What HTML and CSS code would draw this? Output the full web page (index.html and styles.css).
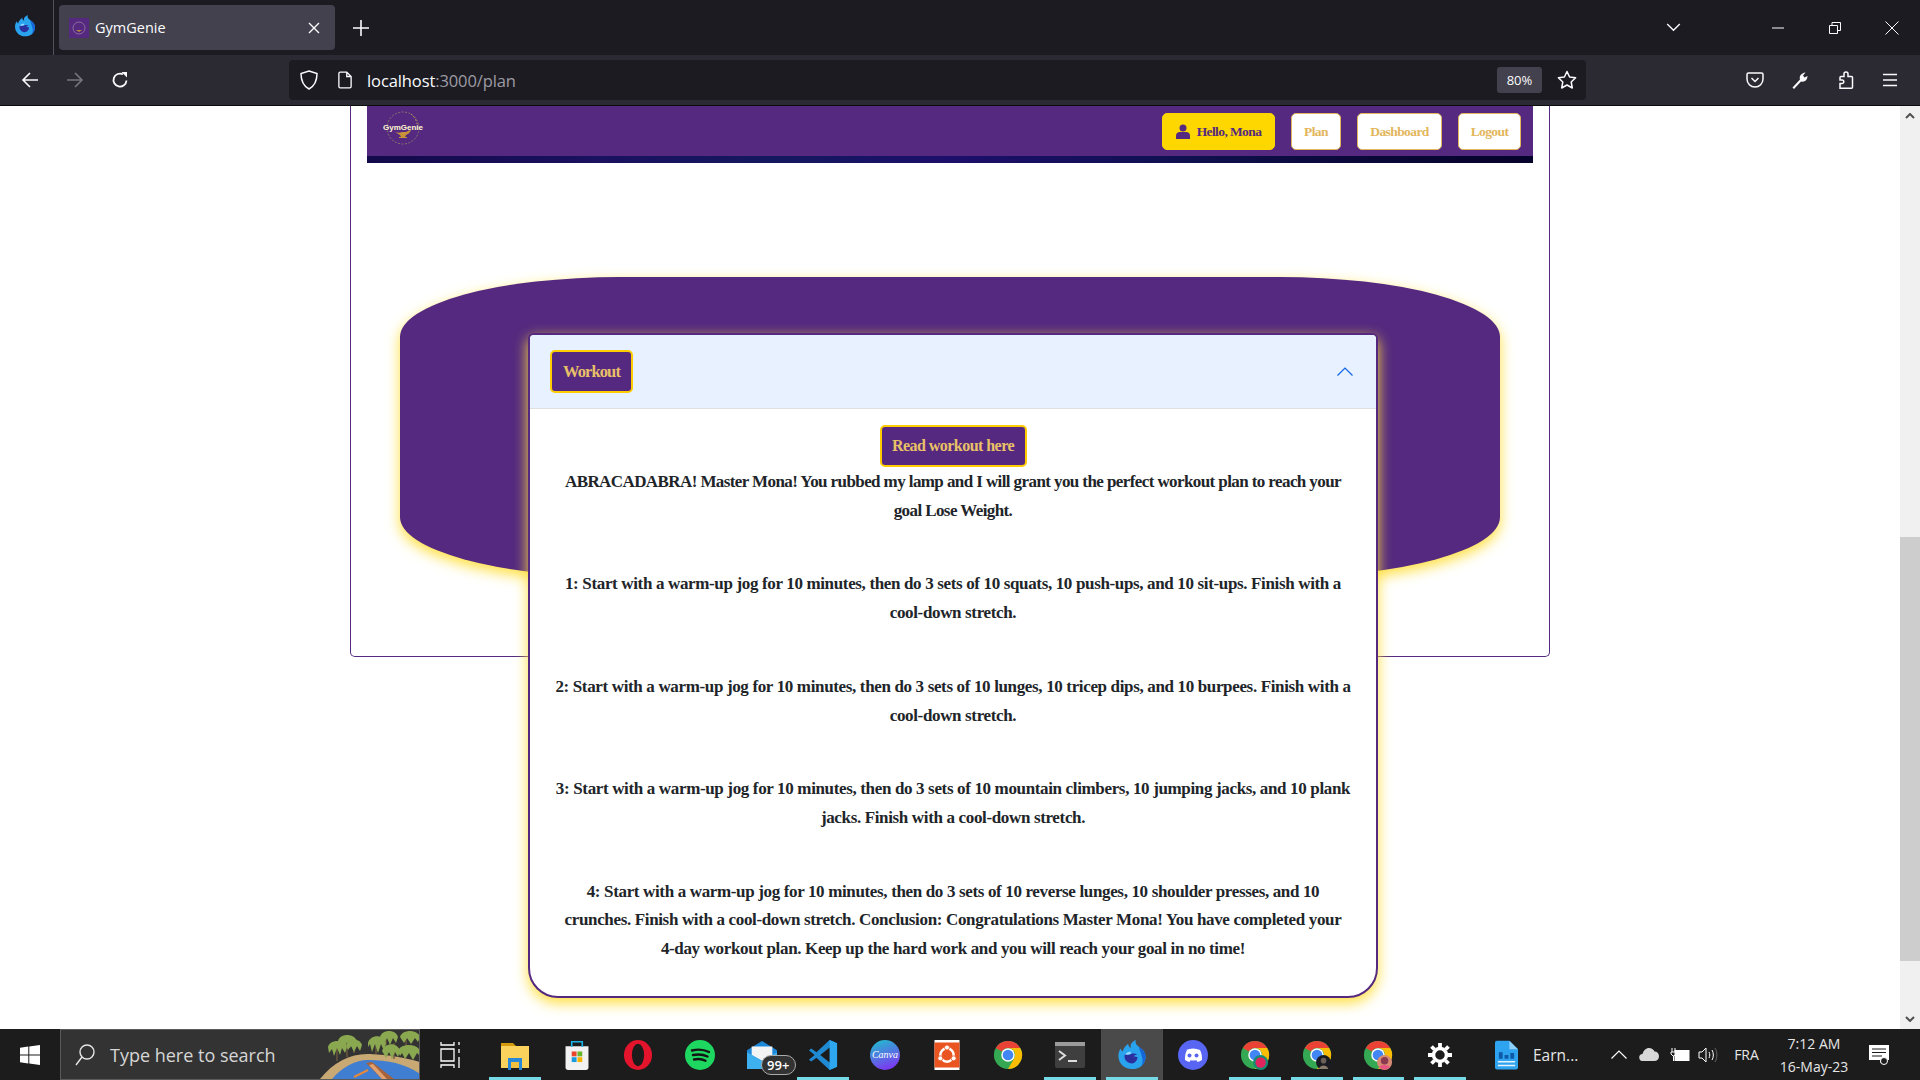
FILE: index.html
```html
<!DOCTYPE html>
<html lang="en">
<head>
<meta charset="utf-8">
<title>GymGenie</title>
<link rel="stylesheet" href="styles.css">
</head>
<body>
<svg class="defs" width="0" height="0">
  <symbol id="firefox" viewBox="0 0 32 32">
    <path d="M16 31C7.5 31 1.5 24.5 1.5 17c0-3 1-6 2.500-8 .3 1.500 1 2.500 2 3.200C7 8.500 10 5.500 12 4c-.2 2 1 3.500 3 4.500C13 4.500 17 1.500 20 0c-.8 3 .5 5 3 7 3.500 2.500 7.500 5.500 7.500 11C30.500 25.500 24.500 31 16 31z" fill="#2aa3ef"/>
    <path d="M23 7c3.500 2.500 7.500 5.500 7.500 11 0 4-2 7.500-5 10 2-3 2.500-7 1-10.500C25.500 14 24 10 23 7z" fill="#1565d8"/>
    <path d="M16 25c-4.500 0-8-3.300-8-7.300 0-1 .3-1.800.7-2.500 1.500 1 4 .8 6.300-.2 2.500-1 5-.5 6.500 1-1.500-.2-3 .2-3.800 1.200 2 .2 3.300 1 4.300 1-.5 4-3 6.800-6 6.800z" fill="#2b2f9e"/>
    <path d="M8.700 15.200c1.500-2 4-3 6.300-2.500-.5.700-.5 1.300 0 2-2.300 1-4.800 1.200-6.300.5z" fill="#8fd8ff"/>
  </symbol>
  <symbol id="chrome" viewBox="0 0 32 32">
    <circle cx="16" cy="16" r="15" fill="#34a853"/>
    <path d="M16 1a15 15 0 0 1 13 7.500H16a7.500 7.500 0 0 0-6.500 3.750L3 8.500A15 15 0 0 1 16 1z" fill="#ea4335"/>
    <path d="M29 8.500A15 15 0 0 1 16 31l6.500-11.250A7.500 7.500 0 0 0 22.500 12.250 7.500 7.500 0 0 0 16 8.500z" fill="#fbbc04"/>
    <circle cx="16" cy="16" r="7.200" fill="#fff"/>
    <circle cx="16" cy="16" r="5.700" fill="#4285f4"/>
  </symbol>
</svg>

<div class="screen">
  <header class="tabbar">
    <div class="ff-slot">
      <svg class="ff-logo" viewBox="0 0 32 32"><use href="#firefox"/></svg>
    </div>
    <div class="tab">
      <svg class="favicon" viewBox="0 0 20 20"><rect width="20" height="20" fill="#54297f"/><circle cx="10" cy="10" r="6" fill="none" stroke="#8d6d9a" stroke-width="1"/><path d="M7 12h6l-3 2z" fill="#b98a3c"/></svg>
      <span class="tab-title">GymGenie</span>
      <svg class="tab-close" viewBox="0 0 12 12"><path d="M1 1l10 10M11 1L1 11" stroke="#fbfbfe" stroke-width="1.400" fill="none"/></svg>
    </div>
    <svg class="new-tab" viewBox="0 0 16 16"><path d="M8 0v16M0 8h16" stroke="#fbfbfe" stroke-width="1.600" fill="none"/></svg>
    <svg class="tab-list" viewBox="0 0 16 10"><path d="M1 1l7 7 7-7" stroke="#fbfbfe" stroke-width="1.500" fill="none"/></svg>
    <svg class="win-btn win-min" viewBox="0 0 12 12"><path d="M0 6h12" stroke="#fbfbfe" stroke-width="1" fill="none"/></svg>
    <svg class="win-btn win-res" viewBox="0 0 12 12"><path d="M.5 3.500h8v8h-8zM3 3.500V.5h8.500v8H8.500" stroke="#fbfbfe" stroke-width="1" fill="none"/></svg>
    <svg class="win-btn win-cls" viewBox="0 0 14 14"><path d="M.5.5l13 13M13.500.5l-13 13" stroke="#fbfbfe" stroke-width="1" fill="none"/></svg>
  </header>

  <nav class="toolbar">
    <svg class="tool-icon tool-back" viewBox="0 0 18 18"><path d="M17 9H2M9 2 2 9l7 7" stroke="#fbfbfe" stroke-width="1.600" fill="none"/></svg>
    <svg class="tool-icon tool-fwd" viewBox="0 0 18 18"><path d="M1 9h15M9 2l7 7-7 7" stroke="#77767c" stroke-width="1.600" fill="none"/></svg>
    <svg class="tool-icon tool-reload" viewBox="0 0 18 18"><path d="M15.500 9.500A6.500 6.500 0 1 1 12 3.300" stroke="#fbfbfe" stroke-width="1.800" fill="none"/><path d="M10.500 1h5.500v5.500z" fill="#fbfbfe"/></svg>
    <div class="urlbar">
      <svg class="url-shield" viewBox="0 0 18 20"><path d="M9 1l8 2.500c0 7-1.500 12-8 15.500C2.500 15.500 1 10.500 1 3.500z" stroke="#fbfbfe" stroke-width="1.500" fill="none"/></svg>
      <svg class="url-page" viewBox="0 0 16 20"><path d="M2.500 1H10l5 5v11.500a1.500 1.500 0 0 1-1.500 1.500h-11A1.500 1.500 0 0 1 1 17.500v-15A1.500 1.500 0 0 1 2.500 1zM10 1v5h5" stroke="#fbfbfe" stroke-width="1.500" fill="none"/></svg>
      <span class="url-text">localhost<span class="url-dim">:3000/plan</span></span>
      <span class="zoom-badge">80%</span>
      <svg class="url-star" viewBox="0 0 20 20"><path d="M10 1.500l2.600 5.500 6 .8-4.400 4.200 1.100 6L10 15l-5.300 3 1.100-6L1.400 7.800l6-.8z" stroke="#fbfbfe" stroke-width="1.500" fill="none" stroke-linejoin="round"/></svg>
    </div>
    <svg class="tool-icon tool-pocket" viewBox="0 0 18 18"><path d="M2.500 2h13A1.500 1.500 0 0 1 17 3.500V8A8 8 0 0 1 1 8V3.500A1.500 1.500 0 0 1 2.500 2z" stroke="#fbfbfe" stroke-width="1.500" fill="none"/><path d="M5.500 7 9 10.500 12.500 7" stroke="#fbfbfe" stroke-width="1.500" fill="none"/></svg>
    <svg class="tool-icon tool-wrench" viewBox="0 0 18 18"><path d="M1.500 16.500 9 8.500c-1-3 1-6.500 5.500-7l-2.500 3 1.500 2 3-1.500c0 4-3 6.500-6.500 5.500l-7 7.500z" fill="#fbfbfe"/></svg>
    <svg class="tool-icon tool-puzzle" viewBox="0 0 18 18"><path d="M3 17.200h11.500a1 1 0 0 0 1-1V6.500a1 1 0 0 0-1-1H11V3a2 2 0 0 0-4 0v2.500H4a1 1 0 0 0-1 1V9h2a1.800 1.800 0 0 1 0 3.600H3z" stroke="#fbfbfe" stroke-width="1.500" fill="none"/></svg>
    <svg class="tool-icon tool-menu" viewBox="0 0 18 18"><path d="M2 3.500h14M2 9h14M2 14.500h14" stroke="#fbfbfe" stroke-width="1.600" fill="none"/></svg>
  </nav>

  <div class="viewport">
    <main class="page">
      <section class="frame">
        <div class="site-nav">
          <div class="site-nav-row">
            <svg class="site-logo" viewBox="0 0 44 40">
              <circle cx="22" cy="21" r="16" fill="none" stroke="#8a7570" stroke-width="1" stroke-dasharray="2 1.500"/>
              <path d="M30 7a16 16 0 0 1 6 10" fill="none" stroke="#c9a24a" stroke-width="1" stroke-dasharray="1.500 2"/>
              <path d="M14 25c3 1 5 1 7 0l4 0c2-1 3-2 5-2-1 2-2 4-5 5l-1 2h2v1h-8v-1h2l-1-2c-2-1-3-2-5-3z" fill="#c8923a"/>
              <text class="logo-text" x="22" y="23" text-anchor="middle">GymGenie</text>
            </svg>
            <div class="nav-actions">
              <a class="nav-btn nav-hello">
                <svg class="user-icon" viewBox="0 0 14 15"><circle cx="7" cy="4" r="3.500" fill="#54297f"/><path d="M0 15v-3a4 4 0 0 1 4-4h6a4 4 0 0 1 4 4v3z" fill="#54297f"/></svg>
                Hello, Mona
              </a>
              <a class="nav-btn nav-plan">Plan</a>
              <a class="nav-btn nav-dash">Dashboard</a>
              <a class="nav-btn nav-logout">Logout</a>
            </div>
          </div>
          <div class="site-nav-strip"></div>
        </div>

        <div class="hero">
          <article class="card">
            <div class="card-head">
              <span class="workout-badge">Workout</span>
              <svg class="chevron" viewBox="0 0 16 9"><path d="M.5 8.500 8 1l7.500 7.500" stroke="#0c63e4" stroke-width="1.200" fill="none"/></svg>
            </div>
            <div class="card-body">
              <button class="read-btn">Read workout here</button>
              <p class="plan-text plan-intro">ABRACADABRA! Master Mona! You rubbed my lamp and I will grant you the perfect workout plan to reach your<br>goal Lose Weight.</p>
              <p class="plan-text">1: Start with a warm-up jog for 10 minutes, then do 3 sets of 10 squats, 10 push-ups, and 10 sit-ups. Finish with a<br>cool-down stretch.</p>
              <p class="plan-text">2: Start with a warm-up jog for 10 minutes, then do 3 sets of 10 lunges, 10 tricep dips, and 10 burpees. Finish with a<br>cool-down stretch.</p>
              <p class="plan-text">3: Start with a warm-up jog for 10 minutes, then do 3 sets of 10 mountain climbers, 10 jumping jacks, and 10 plank<br>jacks. Finish with a cool-down stretch.</p>
              <p class="plan-text">4: Start with a warm-up jog for 10 minutes, then do 3 sets of 10 reverse lunges, 10 shoulder presses, and 10<br>crunches. Finish with a cool-down stretch. Conclusion: Congratulations Master Mona! You have completed your<br>4-day workout plan. Keep up the hard work and you will reach your goal in no time!</p>
            </div>
          </article>
        </div>
      </section>
    </main>
    <aside class="scrollbar">
      <svg class="sb-arrow" viewBox="0 0 10 6"><path d="M1 5l4-4 4 4" stroke="#505050" stroke-width="2" fill="none"/></svg>
      <div class="sb-track"><div class="sb-thumb"></div></div>
      <svg class="sb-arrow" viewBox="0 0 10 6"><path d="M1 1l4 4 4-4" stroke="#505050" stroke-width="2" fill="none"/></svg>
    </aside>
  </div>

  <footer class="taskbar">
    <div class="tb-start">
      <svg class="win-logo" viewBox="0 0 20 20"><path d="M0 2.800 8.300 1.600v7.800H0zM9.300 1.500 20 0v9.400H9.300zM0 10.400h8.300v8L0 17.200zM9.300 10.400H20V20L9.300 18.500z" fill="#fff"/></svg>
    </div>
    <div class="tb-search">
      <svg class="search-glass" viewBox="0 0 20 24"><circle cx="12" cy="9" r="7" stroke="#e6e6e6" stroke-width="1.400" fill="none"/><path d="M7 14 1 22" stroke="#e6e6e6" stroke-width="1.400" fill="none"/></svg>
      <span class="search-text">Type here to search</span>
      <svg class="search-art" viewBox="0 0 100 50">
        <path d="M0 50C14 32 32 24 50 25c20 1 36 4 50 8v17z" fill="#c8a873"/>
        <path d="M12 50C22 38 36 31 48 31c20 0 38 4 52 14v5z" fill="#3f7ed0"/>
        <path d="M46 34l6-1 22 17H62z" fill="#a8623a"/>
        <path d="M49 36l4-1 14 15h-5z" fill="#e0a070"/>
        <path d="M34 48l14-7" stroke="#e6883a" stroke-width="2"/>
        <g stroke="#6d5a3e" stroke-width="1.400"><path d="M17 32V14M27 28V10M34 24V12M56 25V8M66 27V4M74 30V14M86 28V6"/></g>
        <g fill="#8aa850">
          <path d="M8 18C10 10 24 10 27 18l-2 6-3-5-2 7-3-7-3 8-2-7-3 4z"/>
          <path d="M18 12C20 4 34 4 37 12l-2 7-3-6-2 6-3-6-3 7-2-6-3 3z"/>
          <path d="M26 16C29 9 40 9 42 16l-2 6-3-5-3 6-3-6-3 4z"/>
          <path d="M48 14C50 5 64 5 66 14l-2 8-3-7-3 9-3-9-3 8-2-8-2 3z"/>
          <path d="M60 8C62 0 76 0 78 8l-2 6-3-5-3 7-3-7-3 6z"/>
          <path d="M62 22C65 13 78 13 80 22l-2 6-3-5-3 7-3-7-3 6z"/>
          <path d="M78 22C80 14 98 14 100 22v5l-3-3-4 7-4-7-4 6-3-6-2 3z"/>
          <path d="M80 8C82 0 98 0 100 8l-2 5-3-4-4 6-4-6-3 5z"/>
        </g>
      </svg>
    </div>
    <div class="tb-taskview">
      <svg class="tv-icon" viewBox="0 0 20 26"><path d="M1 0v3h13V0M1 26v-3h13v3M1 7h13v12H1zM19 0v3M19 7v4M19 15v11" stroke="#fff" stroke-width="1.300" fill="none"/></svg>
    </div>
    <div class="tb-apps">
      <div class="app running"><svg class="app-icon" viewBox="0 0 28 30"><path d="M0 3h12l3 3H0z" fill="#d39a10"/><path d="M0 6h28v22H0z" fill="#fbd25c"/><path d="M7 18h14v12h-3v-8h-8v8H7z" fill="#2a88d8"/><path d="M10 22h8v6h-8z" fill="#f0c040"/></svg></div>
      <div class="app"><svg class="app-icon" viewBox="0 0 28 34"><path d="M1 7h26v24a3 3 0 0 1-3 3H4a3 3 0 0 1-3-3z" fill="#f2f2f2"/><path d="M8 8V2h12v6" stroke="#1db3e8" stroke-width="1.800" fill="none"/><rect x="8" y="13" width="5.500" height="5.500" fill="#e8452c"/><rect x="14.500" y="13" width="5.500" height="5.500" fill="#6ab62b"/><rect x="8" y="19.500" width="5.500" height="5.500" fill="#1a9ae0"/><rect x="14.500" y="19.500" width="5.500" height="5.500" fill="#f9b400"/></svg></div>
      <div class="app"><svg class="app-icon" viewBox="0 0 30 32"><ellipse cx="15" cy="16" rx="15" ry="16" fill="#e3142b"/><ellipse cx="15" cy="16" rx="6.500" ry="12" fill="#1c1c1c"/></svg></div>
      <div class="app"><svg class="app-icon" viewBox="0 0 30 30"><circle cx="15" cy="15" r="15" fill="#1ed760"/><path d="M7 10.500c6-1.500 12-1 17 1.500M8 15c5-1 10-.8 14.500 1.500M9 19.500c4-.8 8-.6 11.500 1.200" stroke="#141414" stroke-width="2.400" stroke-linecap="round" fill="none"/></svg></div>
      <div class="app app-mail">
        <svg class="app-icon" viewBox="0 0 32 30"><path d="M0 10 16 0l16 10v20H0z" fill="#1e88d8"/><path d="M5 6h22v9l-11 6-11-6z" fill="#f4f4f4"/><path d="M0 12l16 9 16-9v18H0z" fill="#3fb0ef"/></svg>
        <span class="mail-badge">99+</span>
      </div>
      <div class="app running"><svg class="app-icon" viewBox="0 0 30 32"><path d="M22 0l8 3.500v25L22 32 8 19l-5.500 4L0 21l6-5-6-5 2.500-2L8 13z" fill="#1f8ad2"/><path d="M22 0l8 3.500v25L22 32zM22 8 12 16l10 8z" fill="#2ea7ef"/><path d="M22 8 12 16l10 8z" fill="#1c1c1c"/></svg></div>
      <div class="app"><div class="canva"><span class="canva-text">Canva</span></div></div>
      <div class="app"><svg class="app-icon" viewBox="0 0 30 36"><rect width="30" height="36" fill="#fff"/><rect x="0" y="3" width="30" height="30" fill="#e95420"/><circle cx="15" cy="18" r="8" fill="none" stroke="#fff" stroke-width="3"/><circle cx="15" cy="9" r="3" fill="#fff" stroke="#e95420"/><circle cx="7" cy="22" r="3" fill="#fff" stroke="#e95420"/><circle cx="23" cy="22" r="3" fill="#fff" stroke="#e95420"/></svg></div>
      <div class="app"><svg class="app-icon" viewBox="0 0 32 32"><use href="#chrome"/></svg></div>
      <div class="app running"><svg class="app-icon" viewBox="0 0 30 26"><rect width="30" height="26" rx="2" fill="#3f3f3f"/><rect width="30" height="4" fill="#9b9b9b"/><path d="M4 9l6 4.500L4 18" stroke="#ddd" stroke-width="2" fill="none"/><path d="M13 19h9" stroke="#ddd" stroke-width="2"/></svg></div>
      <div class="app running active"><svg class="app-icon app-ff" viewBox="0 0 32 32"><use href="#firefox"/></svg></div>
      <div class="app"><svg class="app-icon" viewBox="0 0 30 30"><circle cx="15" cy="15" r="15" fill="#5865f2"/><path d="M8 10c4.500-2 9.500-2 14 0 1.500 3 2.300 6.500 2 10-1.500 1-3 1.600-4.500 2l-1-1.800c-2 .5-4 .5-6 0l-1 1.800c-1.500-.4-3-1-4.500-2-.3-3.500.5-7 2-10z" fill="#fff"/><circle cx="11.500" cy="15.500" r="2" fill="#5865f2"/><circle cx="18.500" cy="15.500" r="2" fill="#5865f2"/></svg></div>
      <div class="app running"><svg class="app-icon" viewBox="0 0 32 32"><use href="#chrome"/><circle cx="22" cy="24" r="8" fill="#168b74"/><circle cx="22" cy="24" r="5.500" fill="#e0245e"/></svg></div>
      <div class="app running"><svg class="app-icon" viewBox="0 0 32 32"><use href="#chrome"/><circle cx="23" cy="24" r="8" fill="#1a1a22"/><path d="M18 31c1-5 9-5 10 0z" fill="#8a7c6c"/><circle cx="23" cy="22" r="3" fill="#6a6058"/></svg></div>
      <div class="app running"><svg class="app-icon" viewBox="0 0 32 32"><use href="#chrome"/><circle cx="23" cy="24" r="8" fill="#d98a72"/><circle cx="23" cy="22" r="4" fill="#8b3a50"/><path d="M17 29c2-3 9-3 12 0l-6 3z" fill="#e75480"/></svg></div>
      <div class="app running"><svg class="gear" viewBox="0 0 24 24"><circle cx="12" cy="12" r="6.500" fill="none" stroke="#fff" stroke-width="3.500"/><g stroke="#fff" stroke-width="3.800"><path d="M12 0v4M12 20v4M0 12h4M20 12h4M3.500 3.500l3 3M17.500 17.500l3 3M3.500 20.500l3-3M17.500 6.500l3-3"/></g></svg></div>
    </div>
    <div class="tb-doc">
      <svg class="doc-icon" viewBox="0 0 24 30"><path d="M2 0h13l9 9v19a2 2 0 0 1-2 2H2a2 2 0 0 1-2-2V2a2 2 0 0 1 2-2z" fill="#2ea3ef"/><path d="M15 0l9 9h-9z" fill="#8ed0f8"/><path d="M4 12h4v7H4zM10 15h4v4h-4zM16 13h4v6h-4z" fill="#0d5aa8"/><path d="M3 22h18M3 26h18" stroke="#e6f4fd" stroke-width="1.600"/></svg>
      <span class="doc-text">Earn...</span>
    </div>
    <div class="tb-tray">
      <svg class="tray-chev" viewBox="0 0 16 9"><path d="M.5 8.500 8 1l7.500 7.500" stroke="#fff" stroke-width="1.200" fill="none"/></svg>
      <svg class="tray-cloud" viewBox="0 0 20 13"><path d="M4 13a3.500 3.500 0 0 1-.5-7C4.500 2.500 7 0 10 0c2.500 0 4.500 1.500 5.500 3.500 2.500 0 4.500 2 4.500 4.700 0 2.800-2 4.800-4.500 4.800z" fill="#d8d8d8"/></svg>
      <svg class="tray-batt" viewBox="0 0 20 14"><path d="M2 0v4M5 0v4M1 4h5v2l-2 2H3L1 6zM3.500 8v5" stroke="#fff" stroke-width="1" fill="none"/><rect x="5" y="2.500" width="14" height="10" fill="#fff" stroke="#fff"/></svg>
      <svg class="tray-spk" viewBox="0 0 20 16"><path d="M1 5h3l4-4v14l-4-4H1z" stroke="#fff" fill="none"/><path d="M11 5c1 2 1 4 0 6M14 3c1.800 3 1.800 7 0 10" stroke="#fff" fill="none"/><path d="M17 1c2.500 4 2.500 10 0 14" stroke="#666" fill="none"/></svg>
      <span class="tray-lang">FRA</span>
      <div class="tray-clock"><span>7:12 AM</span><span>16-May-23</span></div>
      <svg class="tray-note" viewBox="0 0 20 20"><path d="M0 0h20v15h-6l-3 3v-3H0z" fill="#fff"/><path d="M3 4h14M3 7.500h14M3 11h10" stroke="#1c1c1c" stroke-width="1"/><circle cx="15" cy="16" r="3.500" fill="#1c1c1c" stroke="#fff"/></svg>
    </div>
  </footer>
</div>
</body>
</html>
```

FILE: styles.css
```css
* { box-sizing: border-box; }
html, body { margin: 0; padding: 0; height: 100%; overflow: hidden; }
body { font-family: "Open Sans", "Noto Sans", sans-serif; background: #fff; }
.defs { position: absolute; }
.screen { display: flex; flex-direction: column; width: 1920px; height: 1080px; }

/* tab strip */
.tabbar { flex: 0 0 55px; display: flex; align-items: center; background: #1c1b22; color: #fbfbfe; }
.ff-slot { width: 54px; height: 55px; display: flex; align-items: center; padding-left: 14px; border-right: 1px solid #52525e; }
.ff-logo { width: 22px; height: 24px; margin-top: -3px; }
.tab { width: 276px; height: 45px; margin-left: 5px; padding: 0 15px 0 10px; display: flex; align-items: center; background: #42414d; border-radius: 4px; }
.favicon { width: 20px; height: 20px; }
.tab-title { margin-left: 6px; font-size: 14.500px; flex: 1; }
.tab-close { width: 12px; height: 12px; }
.new-tab { width: 16px; height: 16px; margin-left: 18px; }
.tab-list { width: 15px; height: 9px; margin-left: 1297px; margin-top: -1px; }
.win-btn { width: 12px; height: 12px; }
.win-min { margin-left: 91px; }
.win-res { margin-left: 45px; }
.win-cls { width: 14px; height: 14px; margin-left: 44px; }

/* toolbar */
.toolbar { flex: 0 0 51px; display: flex; align-items: center; background: #2b2a33; border-bottom: 1px solid #0c0c0d; }
.tool-icon { width: 18px; height: 18px; flex: none; }
.tool-back { margin-left: 21px; }
.tool-fwd { margin-left: 27px; }
.tool-reload { margin-left: 27px; }
.urlbar { width: 1297px; height: 40px; margin-left: 160px; display: flex; align-items: center; background: #1c1b22; border-radius: 4px; padding-left: 11px; color: #fbfbfe; }
.url-shield { width: 18px; height: 20px; }
.url-page { width: 14px; height: 18px; margin-left: 20px; }
.url-text { margin-left: 15px; font-size: 16.500px; flex: 1; letter-spacing: -.1px; }
.url-dim { color: #9c9ba4; }
.zoom-badge { width: 45px; height: 26px; display: flex; align-items: center; justify-content: center; background: #42414d; border-radius: 3px; font-size: 13px; margin-right: 15px; }
.url-star { width: 20px; height: 20px; margin-right: 9px; }
.tool-pocket { margin-left: 160px; }
.tool-wrench { margin-left: 27px; }
.tool-puzzle { margin-left: 28px; }
.tool-menu { margin-left: 26px; }

/* page */
.viewport { flex: 1; display: flex; min-height: 0; background: #fff; }
.page { flex: 1; min-width: 0; }
.frame { width: 1200px; height: 551px; margin-left: 350px; border: 1px solid #54297f; border-top: none; border-radius: 0 0 5px 5px; padding: 0 16px; }

.site-nav { font-family: "Liberation Serif", serif; }
.site-nav-row { height: 50px; display: flex; align-items: center; justify-content: space-between; background: #54297f; padding: 0 12px 0 14px; }
.site-logo { width: 44px; height: 40px; margin-top: -9px; }
.logo-text { font-family: "Liberation Sans", sans-serif; font-size: 8px; font-weight: 700; fill: #fff7d0; }
.nav-actions { display: flex; gap: 16px; margin-top: 1px; }
.nav-btn { height: 37px; display: flex; align-items: center; justify-content: center; background: #fff; border: 1px solid #e3b65c; border-radius: 5px; color: #e3b65c; font-size: 13.500px; font-weight: 700; letter-spacing: -.6px; }
.nav-hello { width: 113px; background: #ffd700; border-color: #ffd700; color: #54297f; gap: 7px; }
.user-icon { width: 14px; height: 15px; }
.nav-plan { width: 50px; }
.nav-dash { width: 85px; }
.nav-logout { width: 63px; }
.site-nav-strip { height: 7px; background: linear-gradient(90deg, #120a4a 0%, #1a1160 20%, #14185e 35%, #1c0f6b 50%, #0f1050 70%, #0a0838 85%, #05032a 100%); }

.hero { width: 1100px; height: 300px; margin: 114px 0 0 33px; padding: 56px 0 0 128px; background: #54297f; border-radius: 20%; box-shadow: 0 5px 14px #ffdf3c; font-family: "Liberation Serif", serif; }
.card { position: relative; width: 850px; background: #fff; border: 2px solid #54297f; border-radius: 6px 6px 30px 30px; box-shadow: 0 5px 14px #ffdf3c; }
.card-head { height: 74px; display: flex; align-items: center; justify-content: space-between; padding: 0 23px 0 20px; background: #e7f1ff; border-bottom: 1px solid #dfdfdf; border-radius: 4px 4px 0 0; }
.workout-badge { width: 83px; height: 43px; display: flex; align-items: center; justify-content: center; background: #54297f; border: 2px solid #ffcc00; border-radius: 5px; color: #e8c068; font-size: 16.500px; font-weight: 700; letter-spacing: -.9px; }
.chevron { width: 16px; height: 9px; }
.card-body { padding: 16px 16px 32px; display: flex; flex-direction: column; align-items: center; }
.read-btn { width: 147px; height: 42px; margin-bottom: 1px; padding: 0; background: #54297f; border: 2px solid #ffcc00; border-radius: 5px; color: #e8c068; font: 700 16px "Liberation Serif", serif; letter-spacing: -.55px; }
.plan-text { margin: 0 0 44.800px; color: #212529; font-size: 17px; font-weight: 700; line-height: 28.800px; letter-spacing: -.35px; text-align: center; white-space: nowrap; }
.plan-intro { letter-spacing: -.59px; }
.plan-text:last-child { margin-bottom: 0; }

/* scrollbar */
.scrollbar { width: 20px; background: #f0f0f0; display: flex; flex-direction: column; align-items: center; }
.sb-arrow { width: 10px; height: 6px; margin: 7px 0; flex: none; }
.sb-track { flex: 1; width: 100%; padding-top: 411px; }
.sb-thumb { height: 424px; background: #cdcdcd; }

/* taskbar */
.taskbar { flex: 0 0 50px; display: flex; align-items: stretch; background: #1c1c1c; color: #fff; }
.tb-start { width: 60px; display: flex; align-items: center; padding-left: 20px; }
.win-logo { width: 20px; height: 20px; }
.tb-search { width: 360px; display: flex; align-items: center; background: #333; border: 1px solid #5a5a5a; overflow: hidden; padding-left: 14px; }
.search-glass { width: 20px; height: 24px; flex: none; }
.search-text { margin-left: 15px; font-size: 18px; color: #d6d6d6; white-space: nowrap; flex: 1; }
.search-art { width: 100px; height: 50px; flex: none; margin: -1px -1px 0 0; }
.tb-taskview { width: 64px; display: flex; align-items: center; justify-content: center; padding-right: 4px; }
.tv-icon { width: 20px; height: 26px; }
.tb-apps { display: flex; }
.app { position: relative; width: 61.700px; display: flex; align-items: center; justify-content: center; }
.app-icon { width: 30px; height: 30px; }
.running::after { content: ""; position: absolute; left: 5px; right: 5px; bottom: 0; height: 3px; background: #76d9e6; }
.active { background: #4a4a4a; }
.mail-badge { position: absolute; left: 30px; top: 26px; width: 35px; height: 20px; display: flex; align-items: center; justify-content: center; background: #333; border: 1px solid #aaa; border-radius: 10px; font-size: 13px; font-weight: 600; }
.canva { width: 30px; height: 30px; border-radius: 50%; background: linear-gradient(160deg, #1cc4cc, #7a3cf0 85%); display: flex; align-items: center; justify-content: center; }
.canva-text { font-family: "Liberation Serif", serif; font-style: italic; font-size: 10px; color: #fff; }
.gear { width: 24px; height: 24px; }
.tb-doc { width: 129px; display: flex; align-items: center; padding-left: 24px; }
.doc-icon { width: 23px; height: 30px; flex: none; }
.doc-text { margin-left: 15px; font-size: 15.500px; color: #e6e6e6; }
.tb-tray { display: flex; align-items: center; }
.tray-chev { width: 16px; height: 9px; margin-left: 11px; }
.tray-cloud { width: 20px; height: 13px; margin-left: 12px; }
.tray-batt { width: 20px; height: 14px; margin-left: 11px; }
.tray-spk { width: 20px; height: 16px; margin-left: 8px; }
.tray-lang { width: 47px; margin-left: 5px; text-align: center; font-size: 14px; color: #e6e6e6; }
.tray-clock { width: 88px; display: flex; flex-direction: column; align-items: center; font-size: 14px; line-height: 23px; color: #e6e6e6; }
.tray-note { width: 20px; height: 20px; margin-left: 11px; }
```
